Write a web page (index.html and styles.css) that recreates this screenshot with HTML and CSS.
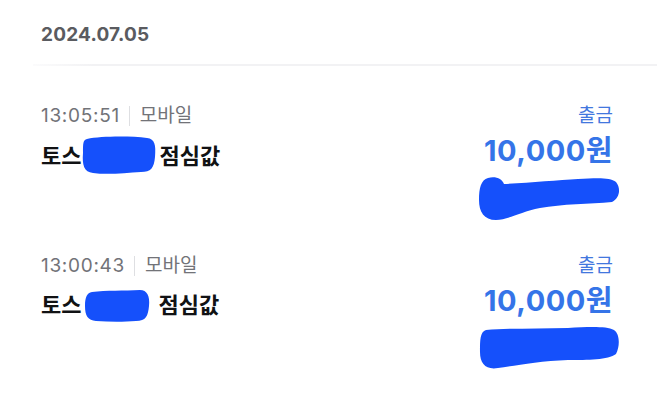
FILE: index.html
```html
<!DOCTYPE html>
<html lang="ko">
<head>
<meta charset="utf-8">
<link rel="stylesheet" href="styles.css">
</head>
<body>
<div class="page">
  <div class="date-head">2024.07.05</div>
  <div class="divider"></div>
  <div class="list">
    <div class="row">
      <div class="left">
        <div class="meta"><span class="time">13:05:51</span><span class="bar"></span><span>모바일</span></div>
        <div class="title">토스<svg class="mask mask1" width="76" height="40" viewBox="0 0 76 40"><path d="M6 4 C20 1 50 1 66 3 C74 4 75 10 74 22 C73 33 70 37 60 37 C44 38 26 40 12 38 C3 37 1 30 2 18 C2 8 2 5 6 4 Z" fill="#1550fb"/></svg>점심값</div>
      </div>
      <div class="right">
        <div class="kind">출금</div>
        <div class="amount">10,000원</div>
        <svg class="scrib" width="142" height="46" viewBox="0 0 142 46"><path d="M10 2 C18 0 24 3 26 8 C50 7 80 4 100 3 C118 2 132 1 138 6 C143 12 142 22 134 26 C112 28 84 28 62 32 C42 36 30 44 18 44 C6 44 1 36 1 24 C1 12 3 4 10 2 Z" fill="#1550fb"/></svg>
      </div>
    </div>
    <div class="row">
      <div class="left">
        <div class="meta"><span class="time">13:00:43</span><span class="bar"></span><span>모바일</span></div>
        <div class="title">토스<svg class="mask mask2" width="66" height="34" viewBox="0 0 66 34"><path d="M8 3 C22 1 40 2 56 1 C63 1 66 7 65 17 C64 27 62 32 52 32 C40 33 26 33 12 32 C4 31 1 27 1 17 C1 8 3 4 8 3 Z" fill="#1550fb"/></svg><span class="gap"></span>점심값</div>
      </div>
      <div class="right">
        <div class="kind">출금</div>
        <div class="amount">10,000원</div>
        <svg class="scrib" width="142" height="46" viewBox="0 0 142 46"><path d="M8 4 C30 2 60 3 90 2 C110 1 128 0 136 4 C142 8 142 20 138 28 C130 34 110 34 90 34 C60 35 36 40 20 42 C8 44 2 38 2 26 C2 14 2 6 8 4 Z" fill="#1550fb"/></svg>
      </div>
    </div>
  </div>
</div>
</body>
</html>
```
FILE: styles.css
```css
* { box-sizing: border-box; }
html, body { margin: 0; padding: 0; background: #ffffff; }
body {
  font-family: Inter, "Noto Sans CJK KR", sans-serif;
  width: 657px;
  height: 413px;
  overflow: hidden;
}
.date-head {
  padding: 23px 0 0 41px;
  height: 64px;
  font-size: 19px;
  line-height: 24px;
  font-weight: 700;
  color: #5a5b60;
  letter-spacing: 0.2px;
}
.divider {
  margin-left: 33px;
  height: 2px;
  background: linear-gradient(to right, #fbfbfc 0, #f2f2f4 60px, #f2f2f4 100%);
}
.list { padding-top: 37px; }
.row {
  display: flex;
  justify-content: space-between;
  padding: 0 44px 0 41px;
  height: 150px;
}
.left { display: flex; flex-direction: column; }
.meta {
  display: flex;
  align-items: center;
  font-size: 19px;
  line-height: 25px;
  color: #727378;
}
.time { letter-spacing: 0.7px; }
.bar {
  width: 1px;
  height: 20px;
  background: #dedfe2;
  margin: 0 10px 0 9px;
}
.title {
  display: flex;
  align-items: center;
  margin-top: 9px;
  font-size: 22px;
  line-height: 30px;
  font-weight: 700;
  color: #111214;
}
.mask { flex: none; }
.mask1 { margin: -2px 2px 0 0; }
.mask2 { margin: 2px 0 0 3px; }
.gap { width: 8px; }
.right { display: flex; flex-direction: column; align-items: flex-end; }
.kind {
  font-size: 19px;
  line-height: 25px;
  color: #4277de;
}
.amount {
  margin-top: 6px;
  font-size: 29px;
  line-height: 34px;
  font-weight: 700;
  color: #3574e8;
  letter-spacing: 0.5px;
}
.scrib { margin: 8px -7px 0 0; }
```
